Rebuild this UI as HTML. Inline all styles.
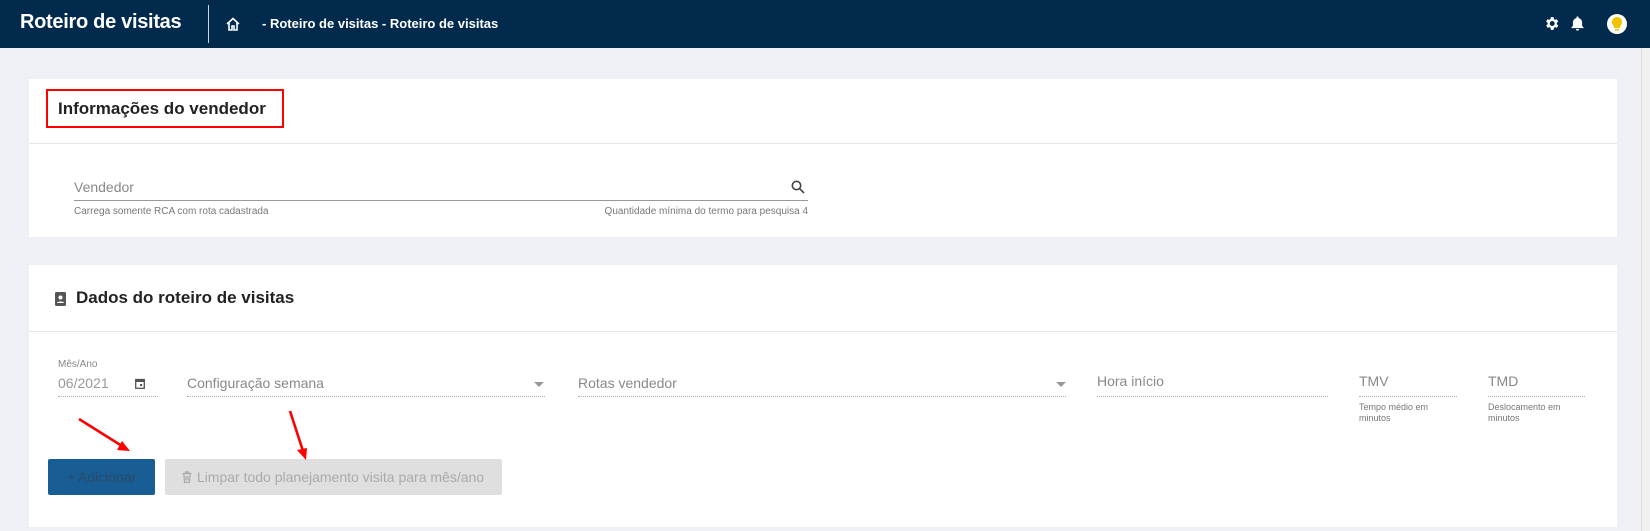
<!DOCTYPE html>
<html><head><meta charset="utf-8"><style>
*{box-sizing:border-box;margin:0;padding:0}
body{width:1650px;height:531px;overflow:hidden;background:#eff0f5;font-family:"Liberation Sans",sans-serif;position:relative}
.hdr{position:absolute;left:0;top:0;width:1650px;height:48px;background:#022a4d;color:#fff}
.a{position:absolute}
.card{position:absolute;background:#fff;left:29px;width:1588px}
.lbl{position:absolute;color:#888;font-size:14px}
.dot{position:absolute;border-bottom:1px dotted #aaa;height:0}
.small{position:absolute;color:#777;font-size:9px;line-height:11px}
</style></head><body>
<div class="hdr">
 <div class="a" style="left:20px;top:11px;font-size:20px;font-weight:bold;letter-spacing:-0.3px">Roteiro de visitas</div>
 <div class="a" style="left:208px;top:5px;width:1px;height:38px;background:#cfd6de"></div>
 <svg class="a" style="left:225px;top:16px" width="16" height="16" viewBox="0 0 16 16" fill="none" stroke="#fff" stroke-width="1.6"><path d="M2 8L8 2.5 14 8M4 6.5V14h3v-4h2v4h3V6.5"/></svg>
 <div class="a" style="left:262px;top:16px;font-size:13px;font-weight:bold">- Roteiro de visitas - Roteiro de visitas</div>
 <svg class="a" style="left:1543px;top:15px" width="17" height="17" viewBox="0 0 24 24"><path fill="#fff" d="M19.4 13a7.5 7.5 0 000-2l2.1-1.6-2-3.5-2.5 1a7 7 0 00-1.7-1L15 3h-4l-.4 2.9a7 7 0 00-1.7 1l-2.5-1-2 3.5L6.6 11a7.5 7.5 0 000 2l-2.1 1.6 2 3.5 2.5-1a7 7 0 001.7 1L11 21h4l.4-2.9a7 7 0 001.7-1l2.5 1 2-3.5zM13 15.5a3.5 3.5 0 110-7 3.5 3.5 0 010 7z"/></svg>
 <svg class="a" style="left:1569px;top:14px" width="17" height="19" viewBox="0 0 24 24"><path fill="#fff" d="M12 22a2.2 2.2 0 002.2-2.2H9.8A2.2 2.2 0 0012 22zm6.5-6.5v-5a6.5 6.5 0 00-5-6.3V3.5a1.5 1.5 0 00-3 0v.7a6.5 6.5 0 00-5 6.3v5L3.5 17.5v1h17v-1z"/></svg>
 <div class="a" style="left:1607px;top:14px;width:20px;height:20px;border-radius:50%;background:#fff"></div>
 <svg class="a" style="left:1610px;top:16px" width="14" height="16" viewBox="0 0 14 16"><path fill="#f2c200" d="M7 1a5 5 0 00-3 9v2h6v-2a5 5 0 00-3-9zM5 13h4v1.5H5z"/></svg>
</div>
<div class="a" style="left:1641px;top:48px;width:9px;height:483px;background:#f0f0f0;border-left:1px solid #ddd"></div>

<div class="card" style="top:79px;height:158px">
 <div class="a" style="left:17px;top:10px;width:238px;height:39px;border:2px solid #f00"></div>
 <div class="a" style="left:29px;top:20px;font-size:17px;font-weight:bold;color:#222">Informações do vendedor</div>
 <div class="a" style="left:0;top:64px;width:1588px;height:1px;background:#e6e6e6"></div>
 <div class="lbl" style="left:45px;top:100px">Vendedor</div>
 <svg class="a" style="left:762px;top:101px" width="14" height="14" viewBox="0 0 14 14" fill="none" stroke="#444" stroke-width="1.6"><circle cx="5.5" cy="5.5" r="4.2"/><path d="M8.6 8.6L13 13"/></svg>
 <div class="a" style="left:45px;top:121px;width:734px;height:1px;background:#999"></div>
 <div class="small" style="left:45px;top:127px;font-size:10px">Carrega somente RCA com rota cadastrada</div>
 <div class="small" style="left:450px;width:329px;text-align:right;top:127px;font-size:10px">Quantidade mínima do termo para pesquisa 4</div>
</div>

<div class="card" style="top:265px;height:262px">
 <svg class="a" style="left:26px;top:27px" width="12" height="14" viewBox="0 0 12 14"><rect x="0" y="0" width="11" height="14" rx="1.5" fill="#555"/><circle cx="5.5" cy="5.5" r="2" fill="#fff"/><path d="M2 11c0-2 7-2 7 0z" fill="#fff"/></svg>
 <div class="a" style="left:47px;top:23px;font-size:17px;font-weight:bold;color:#222">Dados do roteiro de visitas</div>
 <div class="a" style="left:0;top:66px;width:1588px;height:1px;background:#e6e6e6"></div>
 <div class="small" style="left:29px;top:94px;font-size:10px;color:#888">Mês/Ano</div>
 <div class="lbl" style="left:29px;top:110px;color:#999">06/2021</div>
 <svg class="a" style="left:106px;top:113px" width="10" height="11" viewBox="0 0 10 11"><rect x="0.7" y="1.5" width="8.6" height="8.8" fill="none" stroke="#555" stroke-width="1.3"/><rect x="0.7" y="1.5" width="8.6" height="2.5" fill="#555"/><rect x="5" y="6" width="2.2" height="2" fill="#555"/></svg>
 <div class="dot" style="left:29px;top:131px;width:100px"></div>
 <div class="lbl" style="left:158px;top:110px">Configuração semana</div>
 <div class="a" style="left:505px;top:117px;border:5px solid transparent;border-top:5px solid #999;border-bottom:0"></div>
 <div class="dot" style="left:158px;top:131px;width:358px"></div>
 <div class="lbl" style="left:549px;top:110px">Rotas vendedor</div>
 <div class="a" style="left:1027px;top:117px;border:5px solid transparent;border-top:5px solid #999;border-bottom:0"></div>
 <div class="dot" style="left:549px;top:131px;width:488px"></div>
 <div class="lbl" style="left:1068px;top:108px">Hora início</div>
 <div class="dot" style="left:1068px;top:131px;width:231px"></div>
 <div class="lbl" style="left:1330px;top:108px">TMV</div>
 <div class="dot" style="left:1330px;top:131px;width:98px"></div>
 <div class="small" style="left:1330px;top:137px">Tempo médio em<br>minutos</div>
 <div class="lbl" style="left:1459px;top:108px">TMD</div>
 <div class="dot" style="left:1459px;top:131px;width:97px"></div>
 <div class="small" style="left:1459px;top:137px">Deslocamento em<br>minutos</div>
 <div class="a" style="left:19px;top:194px;width:107px;height:36px;background:#185d94;border-radius:2px;color:#2a4a68;font-size:14px;line-height:36px;text-align:center">+ Adicionar</div>
 <div class="a" style="left:136px;top:194px;width:337px;height:36px;background:#dfdfdf;border-radius:2px;color:#aaa;font-size:14px;line-height:36px;text-align:center;padding-left:14px">Limpar todo planejamento visita para mês/ano</div>
 <svg class="a" style="left:153px;top:206px" width="10" height="12" viewBox="0 0 10 12" fill="none" stroke="#aaa" stroke-width="1.2"><path d="M0.5 2.5h9M3.5 2.5V1h3v1.5M1.8 2.5l.7 9h5l.7-9M4 5v4.5M6 5v4.5"/></svg>
</div>
<svg class="a" style="left:0;top:0" width="1650" height="531"><g stroke="#f00" stroke-width="2.6" fill="#f00"><line x1="79" y1="419" x2="122" y2="446"/><path d="M130 451l-13-1 5-9z" stroke="none"/><line x1="290" y1="411" x2="303" y2="451"/><path d="M306 460l-9-10 10-2z" stroke="none"/></g></svg>
</body></html>
